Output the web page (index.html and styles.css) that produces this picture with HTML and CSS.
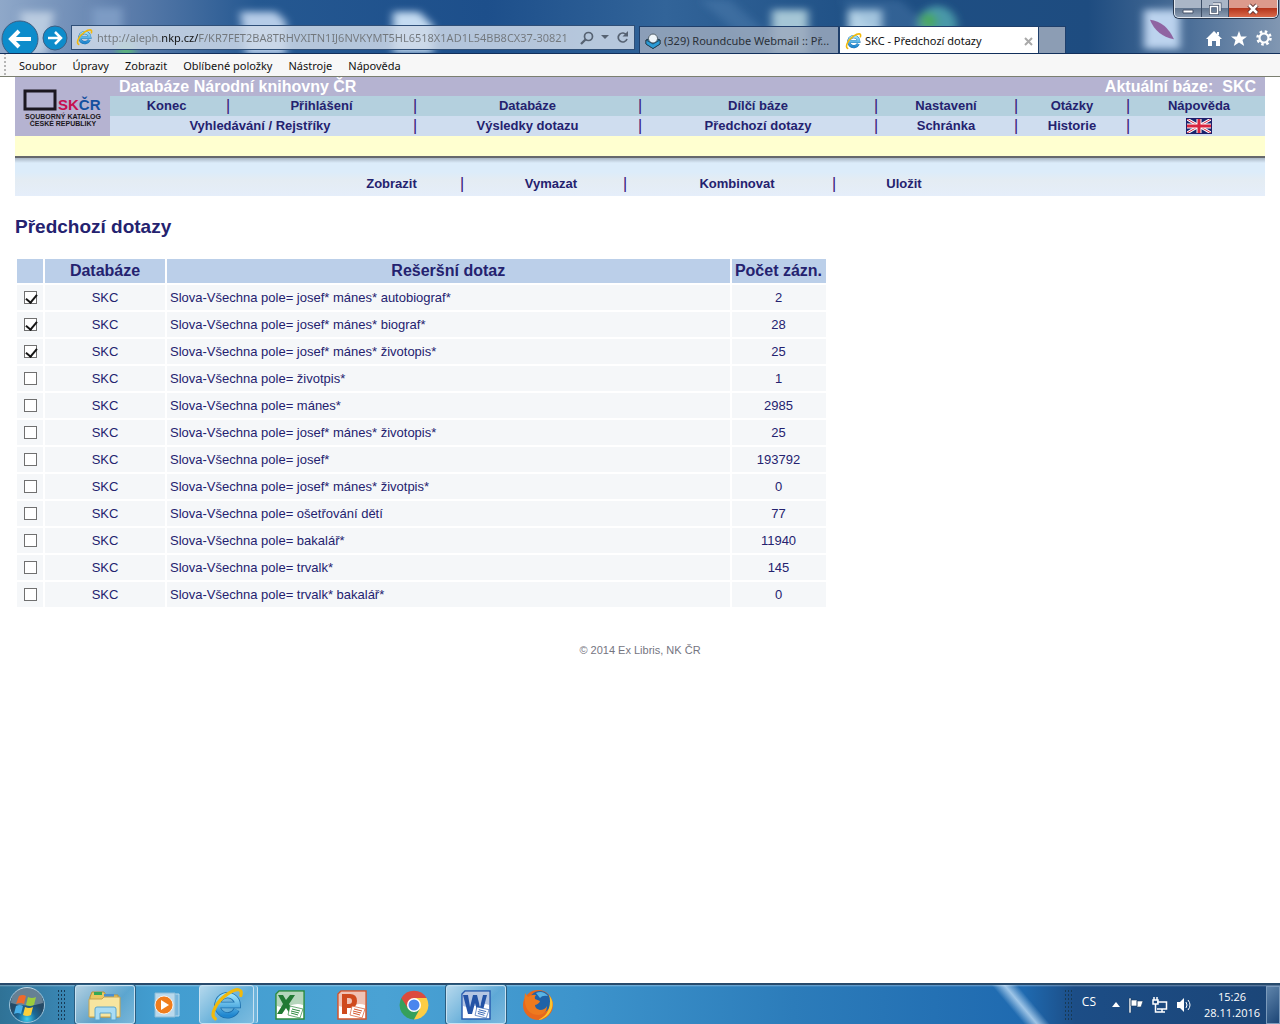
FILE: index.html
```html
<!DOCTYPE html>
<html lang="cs">
<head>
<meta charset="utf-8">
<title>SKC - Předchozí dotazy</title>
<link rel="stylesheet" href="styles.css">
</head>
<body>
<svg class="defs" width="0" height="0" aria-hidden="true">
  <defs>
    <linearGradient id="ieBlue" x1="0" y1="0" x2="0" y2="1"><stop offset="0" stop-color="#9be2fa"/><stop offset="1" stop-color="#1f86cf"/></linearGradient>
    <symbol id="ie" viewBox="0 0 32 32">
      <path d="M25 20.500A9.500 9.500 0 1 1 26 16H9" fill="none" stroke="#1d6fae" stroke-width="6"/>
      <path d="M25 20.500A9.500 9.500 0 1 1 26 16H9" fill="none" stroke="url(#ieBlue)" stroke-width="4.500"/>
      <path d="M5 29C-1 25 7 12 16 6s15-6 13 1" fill="none" stroke="#f2b90c" stroke-width="3" stroke-linecap="round"/>
    </symbol>
    <symbol id="sheet" viewBox="0 0 32 32">
      <path d="M5 2h25v28H2V5z" fill="#fff" stroke="currentColor" stroke-width="1.500"/>
      <path d="M5 3h24v13C20 12 12 21 3 17V5z" fill="currentColor" opacity=".35"/>
    </symbol>
    <symbol id="page" viewBox="0 0 16 14"><path d="M2 1l13 3-3 9L0 10z" fill="#fff" stroke="currentColor" stroke-width=".7"/><path d="M4 4l8 2M3 6l8 2M3 8l7 2" stroke="currentColor" fill="none"/></symbol>
  </defs>
</svg>

<header class="chrome">
  <svg class="glass" viewBox="0 0 1280 54" preserveAspectRatio="none" aria-hidden="true">
    <defs>
      <filter id="soft" x="-20%" y="-20%" width="140%" height="140%"><feGaussianBlur stdDeviation="4"/></filter>
      <linearGradient id="sky"><stop offset="0" stop-color="#8fa8c9"/><stop offset=".1" stop-color="#5c7dab"/><stop offset=".2" stop-color="#255891"/><stop offset=".38" stop-color="#1d4f8b"/><stop offset=".52" stop-color="#326499"/><stop offset=".68" stop-color="#1e4f84"/><stop offset=".85" stop-color="#1e4c80"/><stop offset=".93" stop-color="#4c6f98"/><stop offset="1" stop-color="#8197b2"/></linearGradient>
    </defs>
    <rect width="1280" height="54" fill="url(#sky)"/>
    <g filter="url(#soft)">
      <path d="M20 12h34l-8 44H26z" fill="#b9cbe0"/>
      <path d="M92 8h30v36H92z" fill="#7d9bc4"/><circle cx="126" cy="50" r="9" fill="#5bb57c"/>
      <path d="M240 12h36l10 10v34h-40z" fill="#b5cce8"/>
      <path d="M393 12h26l14 14v28h-40z" fill="#c4dbf2"/>
      <path d="M772 10h36v46h-36z" fill="#a5c6d6"/><path d="M848 10h34v40h-34z" fill="#b4d2e6"/>
      <circle cx="937" cy="26" r="20" fill="#4a98a8"/><circle cx="928" cy="22" r="9" fill="#48a85c"/>
      <path d="M1144 10h36v40h-36z" fill="#bcd3ee"/>
      <path d="M840 0h60l60 54h-60zM700 0h30l60 54h-30z" fill="#6f9bc8" opacity=".25"/>
    </g>
    <path d="M1150 20q16 2 24 20q-18-4-24-20z" fill="#84488f" opacity=".8"/>
  </svg>
  <div class="winbtns">
    <button aria-label="Minimalizovat"><svg width="14" height="12"><path d="M2 7h10v3H2z" fill="#fff" stroke="#46536a"/></svg></button>
    <button aria-label="Obnovit"><svg width="14" height="14"><path d="M5 2h7v7M2.500 4.500h7v7h-7z" fill="none" stroke="#46536a" stroke-width="3"/><path d="M5 2h7v7M2.500 4.500h7v7h-7z" fill="none" stroke="#fff" stroke-width="1.500"/></svg></button>
    <button class="close" aria-label="Zavřít"><svg width="14" height="12"><path d="M3 2l8 8M11 2l-8 8" stroke="#5b3030" stroke-width="4.500"/><path d="M3 2l8 8M11 2l-8 8" stroke="#fff" stroke-width="2.500"/></svg></button>
  </div>
  <div class="navrow">
    <button class="back" aria-label="Zpět"><svg width="38" height="38" viewBox="0 0 38 38"><circle cx="19" cy="19" r="18" fill="#0d8ccb" stroke="#3e5f83"/><path d="M30 19H11M18 11l-8 8 8 8" fill="none" stroke="#fff" stroke-width="4"/></svg></button>
    <button class="fwd" aria-label="Vpřed"><svg width="26" height="26" viewBox="0 0 26 26"><circle cx="13" cy="13" r="12" fill="#0d8ccb" stroke="#3e5f83"/><path d="M6 13h12M13 7l6 6-6 6" fill="none" stroke="#fff" stroke-width="2.500"/></svg></button>
    <form class="address">
      <svg width="17" height="17"><use href="#ie"/></svg>
      <input type="text" aria-label="Adresa" value="http://aleph.nkp.cz/F/KR7FET2BA8TRHVXITN1IJ6NVKYMT5HL6518X1AD1L54BB8CX37-30821">
      <button type="button" aria-label="Hledat"><svg width="14" height="14"><circle cx="8.500" cy="5.500" r="4" fill="none" stroke="#566272" stroke-width="1.700"/><path d="M5.500 8.500L1 13" stroke="#566272" stroke-width="2.300"/></svg></button>
      <button type="button" aria-label="Historie adres"><svg width="8" height="5"><path d="M0 0h8L4 4z" fill="#566272"/></svg></button>
      <button type="button" aria-label="Obnovit stránku"><svg width="13" height="13"><path d="M10.500 4A4.500 4.500 0 1 0 11 8" fill="none" stroke="#566272" stroke-width="1.700"/><path d="M12 0v5.500H6.500z" fill="#566272"/></svg></button>
    </form>
    <a class="tab" href="#webmail"><svg width="16" height="16"><path d="M1 7l7-3 7 3v4l-7 4.500L1 11z" fill="#1c7fb5" stroke="#233746"/><circle cx="8" cy="5.500" r="4.500" fill="#eef5fa" stroke="#52606c"/><path d="M1 7l7 4 7-4v4l-7 4.500L1 11z" fill="#2a9bd6" stroke="#233746" stroke-width=".7"/></svg><span>(329) Roundcube Webmail :: Př...</span></a>
    <a class="tab active" href="#skc"><svg width="17" height="17"><use href="#ie"/></svg><span>SKC - Předchozí dotazy</span><svg class="x" width="9" height="9"><path d="M1 1l7 7M8 1L1 8" stroke="#a9a9a9" stroke-width="2"/></svg></a>
    <button class="newtab" aria-label="Nová karta"></button>
    <div class="tools">
      <button aria-label="Domů"><svg width="16" height="15"><path d="M8 0l8 8h-2v7h-4v-5H6v5H2V8H0zM11 1h2v3h-2z" fill="#fff"/></svg></button>
      <button aria-label="Oblíbené"><svg width="16" height="15"><path d="M8 0l2 5.500h6L11.500 9l1.700 6L8 11.500 2.800 15l1.700-6L0 5.500h6z" fill="#fff"/></svg></button>
      <button aria-label="Nástroje"><svg width="16" height="16" viewBox="-8 -8 16 16"><circle r="6.500" fill="none" stroke="#fff" stroke-width="2.500" stroke-dasharray="2.550"/><circle r="4.500" fill="none" stroke="#fff" stroke-width="2.200"/></svg></button>
    </div>
  </div>
</header>
<nav class="menubar" aria-label="Nabídka">
  <a href="#soubor">Soubor</a><a href="#upravy">Úpravy</a><a href="#zobrazit">Zobrazit</a><a href="#oblibene">Oblíbené položky</a><a href="#nastroje">Nástroje</a><a href="#napoveda">Nápověda</a>
</nav>

<main>
  <div class="banner">
    <a class="logo" href="#skcr" aria-label="Souborný katalog České republiky">
      <svg width="80" height="46" viewBox="0 0 80 46">
        <rect x="2" y="9" width="30" height="18" fill="none" stroke="#1b1720" stroke-width="3"/>
        <text class="mark" x="35" y="28" fill="#c60f4f">SK<tspan fill="#15509f">ČR</tspan></text>
        <text class="tiny" x="40" y="37">SOUBORNÝ KATALOG</text>
        <text class="tiny" x="40" y="44">ČESKÉ REPUBLIKY</text>
      </svg>
    </a>
    <div class="heads">
      <div class="titlerow"><span>Databáze Národní knihovny ČR</span><span>Aktuální báze:&nbsp; SKC</span></div>
      <nav class="links top"><a href="#konec">Konec</a><i>|</i><a href="#prihlaseni">Přihlášení</a><i>|</i><a href="#databaze">Databáze</a><i>|</i><a href="#dilci">Dílčí báze</a><i>|</i><a href="#nastaveni">Nastavení</a><i>|</i><a href="#otazky">Otázky</a><i>|</i><a href="#pomoc">Nápověda</a></nav>
      <nav class="links low"><a class="wide" href="#hledani">Vyhledávání / Rejstříky</a><i>|</i><a href="#vysledky">Výsledky dotazu</a><i>|</i><a href="#predchozi">Předchozí dotazy</a><i>|</i><a href="#schranka">Schránka</a><i>|</i><a href="#historie">Historie</a><i>|</i><a href="#english" aria-label="English"><svg width="26" height="16" viewBox="0 0 26 16"><path fill="#17246d" d="M0 0h26v16H0z"/><path d="M1 1l24 14M25 1L1 15" stroke="#fff" stroke-width="3"/><path d="M1 1l24 14M25 1L1 15" stroke="#d8253f"/><path d="M13 1v14M1 8h24" stroke="#fff" stroke-width="5"/><path d="M13 1v14M1 8h24" stroke="#d8253f" stroke-width="3"/><path d="M.5.500h25v15H.5z" fill="none" stroke="#211f6b"/></svg></a></nav>
    </div>
  </div>
  <div class="notice"></div>
  <nav class="actions"><a href="#zobraz">Zobrazit</a><i>|</i><a href="#vymaz">Vymazat</a><i>|</i><a href="#kombinuj">Kombinovat</a><i>|</i><a href="#uloz">Uložit</a></nav>
  <h1>Předchozí dotazy</h1>
  <table class="queries">
    <colgroup><col class="c1"><col class="c2"><col><col class="c4"></colgroup>
    <thead><tr><th></th><th>Databáze</th><th>Rešeršní dotaz</th><th>Počet zázn.</th></tr></thead>
    <tbody>
      <tr><td><input type="checkbox" aria-labelledby="q1" checked></td><td>SKC</td><td id="q1">Slova-Všechna pole= josef* mánes* autobiograf*</td><td>2</td></tr>
      <tr><td><input type="checkbox" aria-labelledby="q2" checked></td><td>SKC</td><td id="q2">Slova-Všechna pole= josef* mánes* biograf*</td><td>28</td></tr>
      <tr><td><input type="checkbox" aria-labelledby="q3" checked></td><td>SKC</td><td id="q3">Slova-Všechna pole= josef* mánes* životopis*</td><td>25</td></tr>
      <tr><td><input type="checkbox" aria-labelledby="q4"></td><td>SKC</td><td id="q4">Slova-Všechna pole= životpis*</td><td>1</td></tr>
      <tr><td><input type="checkbox" aria-labelledby="q5"></td><td>SKC</td><td id="q5">Slova-Všechna pole= mánes*</td><td>2985</td></tr>
      <tr><td><input type="checkbox" aria-labelledby="q6"></td><td>SKC</td><td id="q6">Slova-Všechna pole= josef* mánes* životopis*</td><td>25</td></tr>
      <tr><td><input type="checkbox" aria-labelledby="q7"></td><td>SKC</td><td id="q7">Slova-Všechna pole= josef*</td><td>193792</td></tr>
      <tr><td><input type="checkbox" aria-labelledby="q8"></td><td>SKC</td><td id="q8">Slova-Všechna pole= josef* mánes* životpis*</td><td>0</td></tr>
      <tr><td><input type="checkbox" aria-labelledby="q9"></td><td>SKC</td><td id="q9">Slova-Všechna pole= ošetřování dětí</td><td>77</td></tr>
      <tr><td><input type="checkbox" aria-labelledby="q10"></td><td>SKC</td><td id="q10">Slova-Všechna pole= bakalář*</td><td>11940</td></tr>
      <tr><td><input type="checkbox" aria-labelledby="q11"></td><td>SKC</td><td id="q11">Slova-Všechna pole= trvalk*</td><td>145</td></tr>
      <tr><td><input type="checkbox" aria-labelledby="q12"></td><td>SKC</td><td id="q12">Slova-Všechna pole= trvalk* bakalář*</td><td>0</td></tr>
    </tbody>
  </table>
  <p class="copy">© 2014 Ex Libris, NK ČR</p>
</main>

<footer class="taskbar">
  <button class="start" aria-label="Start"><svg width="38" height="38" viewBox="0 0 38 38"><defs><radialGradient id="orb" cy=".9"><stop offset="0" stop-color="#3fd0ee"/><stop offset=".5" stop-color="#1a6a9a"/><stop offset="1" stop-color="#254a66"/></radialGradient></defs><circle cx="19" cy="19" r="17.500" fill="url(#orb)" stroke="#9dc4da"/><path d="M3 17a16 16 0 0 1 32 0q-16 5-32 0z" fill="#fff" opacity=".3"/><path d="M11 10q4-2 7 0l-2 8q-4-2-8 0z" fill="#ee6a2c"/><path d="M20 11q4 2 8 0l-2 8q-4 2-8 0z" fill="#9ccc3e"/><path d="M8 20q4-2 7 0l-2 8q-3-2-7 0z" fill="#47aee8"/><path d="M17 21q4 2 8 0l-2 8q-4 2-8 0z" fill="#fcd03b"/></svg></button>
  <span class="grip"></span>
  <button class="task open" aria-label="Průzkumník"><svg width="34" height="32" viewBox="0 0 34 32"><path d="M2 8l2-5h12l2 3h12v22H2z" fill="#e9c862" stroke="#b8913a"/><path d="M6 3h8v3H6z" fill="#35a853"/><path d="M16 5h10v3H16z" fill="#4a8fd0"/><path d="M1 10h13l2-2h16v20H1z" fill="#f7e5a0" stroke="#c9a44c"/><path d="M7 31V20q0-2 2-2h17q2 0 2 2v11h-5v-7H12v7z" fill="#a9dcf4" stroke="#5ba4cc"/></svg></button>
  <button class="task" aria-label="Přehrávač médií"><svg width="28" height="28" viewBox="0 0 28 28"><path d="M8 3h18v22H8z" fill="#78b6dc" stroke="#b6dbef"/><path d="M2 2h20v24H2z" fill="#b9d9ec" stroke="#8bbbd6"/><circle cx="11" cy="14" r="9" fill="#f07d1c" stroke="#fff" stroke-width=".8"/><path d="M8 9l8 5-8 5z" fill="#fff"/></svg></button>
  <button class="task open multi" aria-label="Internet Explorer"><svg width="34" height="34"><use href="#ie"/></svg></button>
  <button class="task" aria-label="Excel"><svg class="excel" width="32" height="32" viewBox="0 0 32 32"><use href="#sheet" width="32" height="32"/><path d="M4 6h5l3 5 4-5h5l-6 9 6 10h-5l-4-6-4 6H3l6-10z"/><use href="#page" x="13" y="16" width="18" height="14"/></svg></button>
  <button class="task" aria-label="PowerPoint"><svg class="ppt" width="32" height="32" viewBox="0 0 32 32"><use href="#sheet" width="32" height="32"/><path fill-rule="evenodd" d="M6 5h8q7 0 7 7t-7 7h-3v6H6zm5 4v6h2q3 0 3-3t-3-3z"/><use href="#page" x="13" y="16" width="18" height="14"/></svg></button>
  <button class="task" aria-label="Chrome"><svg width="30" height="30" viewBox="-15 -15 30 30"><path d="M0 0L-12.600-7A14.500 14.500 0 0 1 12.600-7z" fill="#dc4b3e"/><path d="M0 0L12.600-7A14.500 14.500 0 0 1 0 14.500z" fill="#fdcd45"/><path d="M0 0V14.500A14.500 14.500 0 0 1-12.600-7z" fill="#35a05c"/><path d="M0-7H12.600L6 3z" fill="#fdcd45"/><path d="M-12.600-7L-6 3.500 0 0V-7z" fill="#dc4b3e"/><path d="M-6 3.500L6 3.500 0 14.500z" fill="#35a05c"/><circle r="7" fill="#fff"/><circle r="5.500" fill="#4a86ee"/></svg></button>
  <button class="task open" aria-label="Word"><svg class="word" width="32" height="32" viewBox="0 0 32 32"><use href="#sheet" width="32" height="32"/><path d="M3 6h5l2 12 3-12h4l3 12 3-12h4l-5 19h-4l-3-11-3 11H8z"/><use href="#page" x="14" y="17" width="17" height="13"/></svg></button>
  <button class="task" aria-label="Firefox"><svg width="32" height="32" viewBox="0 0 32 32"><circle cx="16" cy="16" r="15" fill="#e8681c"/><circle cx="18" cy="13" r="11" fill="#1f62a8"/><path d="M14 4q7-3 12 3-6-1-8 2z" fill="#5ab4e4"/><path d="M3 4l3 4q4-3 8-2-2 2-1 4l5 2q-1 3-5 4 0 4 5 5 5 0 7-4 0 8-8 9-12 0-14-12Q2 9 3 4z" fill="#ee7a1e"/><path d="M27 6q5 6 3 13-3 10-14 12 9-4 11-12 2-7 0-13z" fill="#fbc52d"/></svg></button>
  <span class="space"></span>
  <div class="tray">
    <span class="grip"></span>
    <span class="lang">CS</span>
    <button aria-label="Skryté ikony"><svg width="8" height="5"><path d="M0 5l4-5 4 5z" fill="#fff"/></svg></button>
    <button aria-label="Centrum akcí"><svg width="16" height="16"><path d="M1 1h2v15H1zM3 3h6v6H3zM9 4h6l-2 6H9z" fill="#fff" stroke="#1b3c62" stroke-width=".6"/></svg></button>
    <button aria-label="Síť"><svg width="16" height="16"><path d="M5 5h9.500v7H5M7 15h6M10 12v3M1 3h5v4H1zM2 0v3M5 0v3M3.500 7v8H7" fill="none" stroke="#fff" stroke-width="1.500"/></svg></button>
    <button aria-label="Hlasitost"><svg width="16" height="16"><path d="M1 5h3l4-4v14l-4-4H1z" fill="#fff"/><path d="M10 5q2 3 0 6M12 3q4 5 0 10" fill="none" stroke="#fff"/></svg></button>
    <time datetime="2016-11-28T15:26"><span>15:26</span><span>28.11.2016</span></time>
    <button class="desk" aria-label="Zobrazit plochu"></button>
  </div>
</footer>
</body>
</html>
```

FILE: styles.css
```css
* { box-sizing: border-box; }
body {
  margin: 0;
  min-height: 100vh;
  display: flex;
  flex-direction: column;
  background: #fff;
  color: #24226f;
  font: 13px/16px "Liberation Sans", Arial, sans-serif;
}
a { color: inherit; text-decoration: none; }
button { padding: 0; border: 0; background: none; display: flex; align-items: center; justify-content: center; font: inherit; }
svg { display: block; flex: none; }
.defs { position: absolute; }

/* Browser frame */
.chrome {
  position: relative;
  height: 54px;
  padding-top: 20px;
  border-bottom: 1px solid #12305c;
  font: 11px/16px "Noto Sans", "Open Sans", sans-serif;
}
.glass { position: absolute; inset: 0; width: 100%; height: 100%; }
.winbtns {
  position: absolute;
  top: 0;
  right: 2px;
  display: flex;
  height: 18px;
  border: 1px solid #e3e8ef;
  border-top: 0;
  border-radius: 0 0 5px 5px;
  overflow: hidden;
  box-shadow: 0 0 0 1px #26364d;
}
.winbtns button { width: 27px; background: linear-gradient(#aab6c7 45%, #61758f 50%, #8b9cb2); border-right: 1px solid #3c4d66; }
.winbtns .close { width: 48px; border: 0; background: linear-gradient(#dc9a8c 45%, #b5361d 50%, #d9694a); }
.navrow { position: relative; display: flex; align-items: flex-end; height: 33px; padding-left: 1px; }
.back { align-self: flex-start; height: 33px; align-items: flex-start; overflow: hidden; }
.fwd { margin: 0 3px 2px 3px; }
.address {
  flex: 0 1 564px;
  min-width: 0;
  height: 25px;
  margin: 0 4px 3px 0;
  padding: 0 5px 0 4px;
  display: flex;
  align-items: center;
  gap: 7px;
  background: rgba(205, 217, 232, .86);
  border: 1px solid #2f4f78;
}
.address input {
  flex: 1;
  min-width: 0;
  height: 20px;
  margin-left: -3px;
  padding: 0;
  border: 0;
  outline: 0;
  font: inherit;
  color: transparent;
  background: linear-gradient(90deg, #72777c 65px, #111 65px 101px, #72777c 101px);
  -webkit-background-clip: text;
  background-clip: text;
}
.tab {
  flex: 0 1 200px;
  height: 27px;
  display: flex;
  align-items: center;
  gap: 3px;
  padding: 2px 5px 0 5px;
  background: rgba(155, 169, 189, .85);
  border: 1px solid #1f3f6b;
  border-bottom: 0;
  color: #2a3038;
  white-space: nowrap;
  overflow: hidden;
}
.tab.active { background: #fff; color: #111; }
.tab .x { margin-left: auto; }
.newtab { width: 27px; height: 27px; background: #8c9db4; border: 1px solid #1f3f6b; border-width: 1px 1px 0 0; }
.tools { margin: 0 8px 7px auto; display: flex; gap: 9px; }

.menubar {
  height: 23px;
  display: flex;
  align-items: center;
  gap: 16px;
  padding: 2px 0 0 19px;
  background: #f7f7f7 radial-gradient(circle, #b5b5b5 1px, transparent 1px) 3px 2px / 4px 4px repeat-y;
  border-bottom: 1px solid #7b7f70;
  color: #111;
  font: 11px/16px "Noto Sans", "Open Sans", sans-serif;
}

/* Catalogue page */
main { flex: 1; padding: 0 15px; }
.banner { display: flex; }
.logo { flex: 0 0 95px; background: #b5b3d1; padding: 5px 7px 0 8px; }
.logo .mark { font: bold 15px "Liberation Sans Narrow", "Liberation Sans", sans-serif; }
.logo .tiny { font: bold 7px "Liberation Sans", sans-serif; text-anchor: middle; fill: #1b1720; }
.heads { flex: 1; min-width: 0; }
.titlerow {
  height: 19px;
  display: flex;
  justify-content: space-between;
  padding: 0 9px;
  background: #b5b3d1;
  color: #fff;
  font: bold 16px/19px "Liberation Sans", Arial, sans-serif;
}
.links, .actions { display: grid; font-weight: bold; text-align: center; line-height: 20px; }
.links i, .actions i { font-style: normal; font-size: 16px; font-weight: normal; color: #3a1478; }
.links {
  height: 20px;
  grid-template-columns: 113fr 10px 177fr 10px 215fr 10px 226fr 10px 130fr 10px 102fr 10px 132fr;
  white-space: nowrap;
}
.links.top { background: #b4d0de; }
.links.low { background: #cfddef; }
.links .wide { grid-column: span 3; }
.links svg { margin: 2px auto 0; }
.notice { height: 20px; background: #ffffd0; }
.actions {
  height: 40px;
  padding-top: 16px;
  border-top: 2px solid #66686c;
  background: linear-gradient(#a9b6c4, #dcecfa 5px, #dcecfa 14px, #e4ecf3 22px, #e5eefa);
  grid-template-columns: 311fr 131fr 25px 138fr 25px 184fr 25px 100fr 311fr;
}
.actions a:first-child { grid-column: 2; }
.actions i { text-align: left; padding-left: 3px; }
h1 { margin: 21px 0 20px; font-size: 19px; line-height: 20px; }
.queries { width: 65%; border-spacing: 2px; table-layout: fixed; }
.c1 { width: 26px; }
.c2 { width: 120px; }
.c4 { width: 94px; }
.queries th { height: 24px; padding: 0; background: #bbcfe9; font-size: 16px; line-height: 20px; white-space: nowrap; }
.queries td { height: 25px; padding: 0 3px; background: #f5f7f9; text-align: center; }
.queries td:nth-child(3) { text-align: left; }
.queries input {
  appearance: none;
  display: block;
  width: 13px;
  height: 13px;
  margin: 0 auto;
  border: 1px solid #707070;
  background: #fff;
}
.queries input:checked::after {
  content: "";
  display: block;
  width: 5px;
  height: 9px;
  margin: 0 0 0 3px;
  border: solid #151515;
  border-width: 0 2px 2px 0;
  transform: rotate(40deg);
}
.copy { margin: 33px 0; text-align: center; color: #75757f; font-size: 11px; }

/* Taskbar */
.taskbar {
  height: 41px;
  display: flex;
  align-items: center;
  border-top: 2px solid #274a6c;
  background:
    linear-gradient(rgba(255, 255, 255, .35), transparent 2px),
    linear-gradient(50deg, transparent 78%, rgba(190, 220, 245, .8) 79%, transparent 80%),
    linear-gradient(90deg, #2f7296, #3a86b3 5%, #429dd0 12%, #4aa2d4 30%, #3d94cc 45%, #2c7cba 62%, #1f6ab0 80%, #1c4d86 84%, #1b4577);
  font: 11px/16px "Open Sans", "Noto Sans", sans-serif;
  color: #fff;
}
.start { width: 38px; margin: 0 11px 0 8px; }
.grip { width: 9px; height: 32px; background: radial-gradient(circle, #173a56 1px, transparent 1px) 0 0 / 3px 4px; }
.task { width: 60px; height: 39px; margin-right: 2px; border: 1px solid transparent; border-radius: 3px; }
.grip + .task { margin-left: 9px; }
.task.open { border-color: #c8e2f2; background: linear-gradient(135deg, rgba(255, 255, 255, .6), rgba(255, 255, 255, .15) 60%, rgba(255, 255, 255, .3)); box-shadow: 0 0 0 1px #2a5d80; }
.task.multi { width: 55px; margin-right: 6px; box-shadow: 4px 0 0 -1px #6db4dc, 5px 0 0 -1px #c8e2f2; }
.excel { color: #2c8a3e; fill: #217a34; }
.ppt { color: #d4542a; fill: #cf4a1d; }
.word { color: #2a5db0; fill: #2453a6; }
.space { flex: 1; }
.tray { display: flex; align-items: center; gap: 8px; }
.tray .grip { margin-right: 1px; }
.lang { margin: 0 8px 6px 0; font-size: 12px; }
.tray time { width: 64px; text-align: center; white-space: nowrap; }
.tray time span { display: block; }
.desk { width: 14px; height: 38px; margin-left: -6px; border: 1px solid #7b9abb; background: linear-gradient(135deg, #5f84ab, #1d4676); }
```
